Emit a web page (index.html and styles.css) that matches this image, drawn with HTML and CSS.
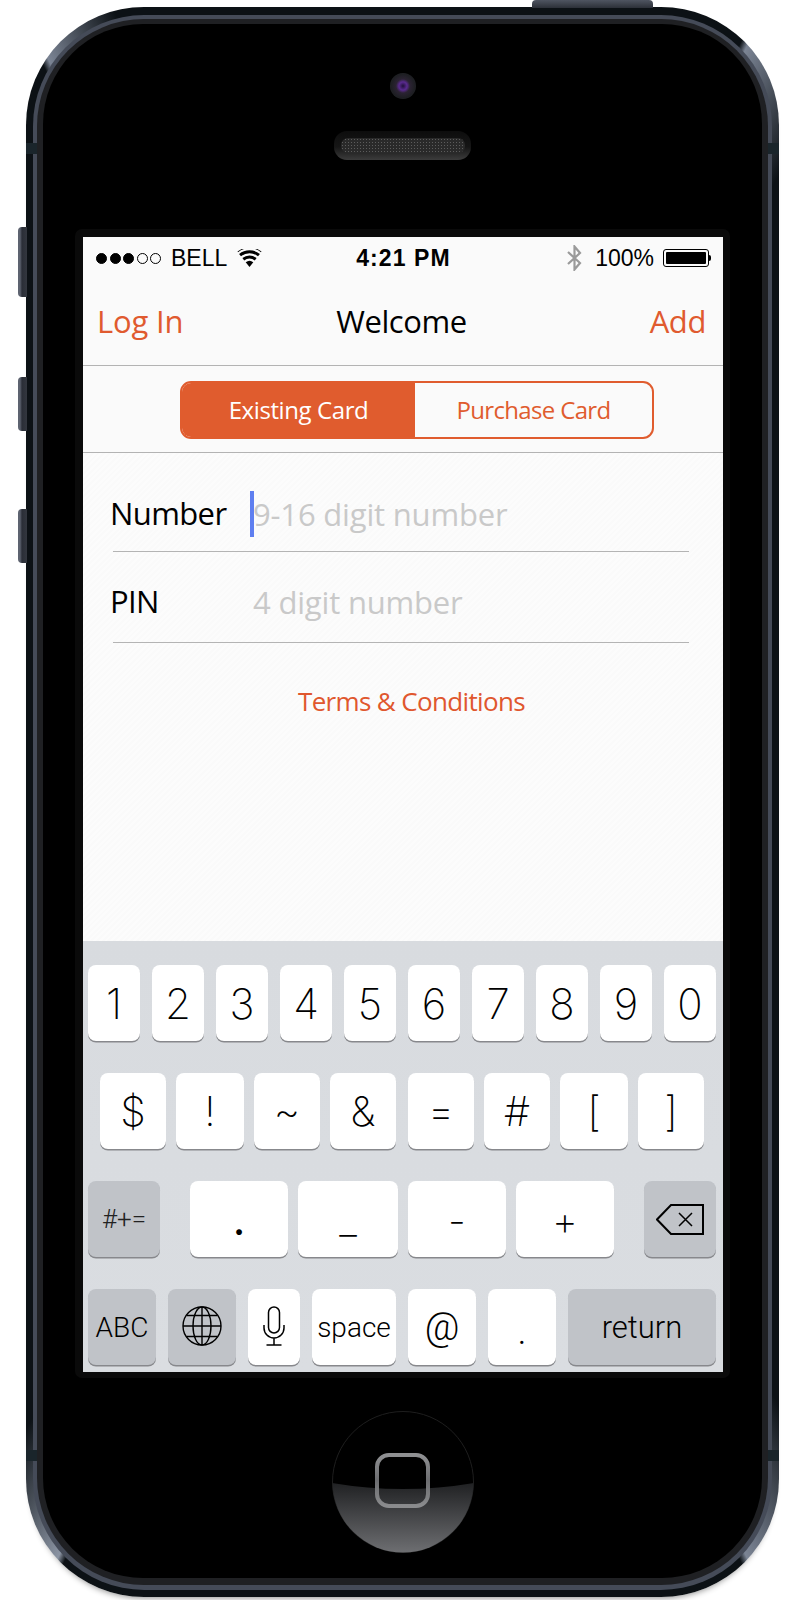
FILE: index.html
```html
<!DOCTYPE html>
<html lang="en">
<head>
<meta charset="utf-8">
<title>Welcome</title>
<link rel="stylesheet" href="styles.css">
</head>
<body>
<div class="phone">
  <span class="side-btn vol-a"></span>
  <span class="side-btn vol-b"></span>
  <span class="side-btn vol-c"></span>
  <span class="power-btn"></span>
  <span class="notch notch-tl"></span>
  <span class="notch notch-tr"></span>
  <span class="notch notch-bl"></span>
  <span class="notch notch-br"></span>
  <div class="rail">
    <div class="rail-inner">
      <div class="face">
        <div class="earpiece">
          <span class="camera"></span>
          <span class="speaker"><span class="grille"></span></span>
        </div>
        <div class="bezel">
          <div class="screen">
            <div class="status">
              <div class="status-left">
                <span class="dots">
                  <span class="dot on"></span><span class="dot on"></span><span class="dot on"></span><span class="dot"></span><span class="dot"></span>
                </span>
                <span class="carrier">BELL</span>
                <svg class="wifi" viewBox="0 0 24 18"><path d="M12 18 8.2 13.2a6 6 0 0 1 7.6 0z"/><path d="M6.7 11.4 4.9 9.1a11.2 11.2 0 0 1 14.2 0l-1.8 2.3a8.3 8.3 0 0 0-10.6 0z"/><path d="M3.5 7.3 1.6 5a16.4 16.4 0 0 1 20.8 0l-1.9 2.3a13.4 13.4 0 0 0-17 0z"/><path d="M.5 3.3 0 2.6a19 19 0 0 1 24 0l-.5.7a18 18 0 0 0-23 0z"/></svg>
              </div>
              <div class="time">4:21 PM</div>
              <div class="status-right">
                <svg class="bt" viewBox="0 0 17 26"><path d="M2 7 14 18 8.5 24.5V1.500L14 8 2 19" fill="none" stroke="#9a9a9a" stroke-width="2.200"/></svg>
                <span class="pct">100%</span>
                <span class="battery"><span class="charge"></span></span>
                <span class="nub"></span>
              </div>
            </div>
            <div class="nav">
              <span class="nav-link">Log In</span>
              <span class="nav-title">Welcome</span>
              <span class="nav-link nav-end">Add</span>
            </div>
            <div class="seg-bar">
              <div class="seg">
                <span class="seg-item active">Existing Card</span>
                <span class="seg-item">Purchase Card</span>
              </div>
            </div>
            <div class="form">
              <div class="row row-first">
                <span class="label">Number</span>
                <span class="value"><span class="cursor"></span>9-16 digit number</span>
              </div>
              <div class="row row-second">
                <span class="label">PIN</span>
                <span class="value">4 digit number</span>
              </div>
              <div class="terms">Terms &amp; Conditions</div>
            </div>
            <div class="keyboard">
              <div class="kb-row digits">
                <span class="key">1</span><span class="key">2</span><span class="key">3</span><span class="key">4</span><span class="key">5</span><span class="key">6</span><span class="key">7</span><span class="key">8</span><span class="key">9</span><span class="key">0</span>
              </div>
              <div class="kb-row symbols">
                <span class="key w66">$</span><span class="key w68">!</span><span class="key w66">~</span><span class="key w66">&amp;</span><span class="key w66 gap-more">=</span><span class="key w66">#</span><span class="key w68">[</span><span class="key w66">]</span>
              </div>
              <div class="kb-row third">
                <span class="key grey w72 small">#+=</span>
                <span class="key w98 gap-a heavy">.</span>
                <span class="key w100">_</span>
                <span class="key w98">-</span>
                <span class="key w98">+</span>
                <span class="key grey w72 gap-b">
                  <svg class="del" viewBox="0 0 48 31"><path d="M47 1v29H15L1 15.500 15 1z" fill="none" stroke="#000" stroke-width="2"/><path d="M23 9 36 22M36 9 23 22" fill="none" stroke="#000" stroke-width="1.500"/></svg>
                </span>
              </div>
              <div class="kb-row fourth">
                <span class="key grey w68 word">ABC</span>
                <span class="key grey w68">
                  <svg class="globe" viewBox="0 0 40 40" fill="none" stroke="#000" stroke-width="1.400"><circle cx="20" cy="20" r="19"/><ellipse cx="20" cy="20" rx="9" ry="19"/><path d="M20 1v38M1 20h38M4.500 9.500h31M4.500 30.500h31"/></svg>
                </span>
                <span class="key w52">
                  <svg class="mic" viewBox="0 0 22 40" fill="none" stroke="#000" stroke-width="1.500"><rect x="5.500" y="1" width="11" height="26" rx="5.500"/><path d="M1 19v3a10 10 0 0 0 20 0v-3M11 32v7M3.500 39h15"/></svg>
                </span>
                <span class="key w84 word">space</span>
                <span class="key w68 at">@</span>
                <span class="key w68 dot-key">.</span>
                <span class="key grey w148 ret">return</span>
              </div>
            </div>
          </div>
        </div>
        <div class="home">
          <svg class="home-svg" viewBox="0 0 142 142">
            <defs>
              <linearGradient id="glass" x1="0" y1="0" x2="0" y2="1">
                <stop offset="0" stop-color="#202123"/>
                <stop offset="1" stop-color="#6e6f72"/>
              </linearGradient>
              <linearGradient id="ring" x1="0" y1="0" x2="0" y2="1">
                <stop offset="0" stop-color="#8f9092"/>
                <stop offset="0.5" stop-color="#6c6d70"/>
                <stop offset="1" stop-color="#8a8b8d"/>
              </linearGradient>
              <clipPath id="disc"><circle cx="71" cy="71" r="70.500"/></clipPath>
            </defs>
            <circle cx="71" cy="71" r="70.500" fill="#000" stroke="#1e1e1e"/>
            <path d="M0 72Q71 84 142 72V142H0z" fill="url(#glass)" clip-path="url(#disc)"/>
            <rect x="45" y="44" width="51" height="51" rx="12" fill="none" stroke="url(#ring)" stroke-width="4"/>
          </svg>
        </div>
      </div>
    </div>
  </div>
</div>
</body>
</html>
```

FILE: styles.css
```css
* { box-sizing: border-box; }

html, body { margin: 0; padding: 0; background: #fff; }

body { height: 1600px; overflow: hidden; padding-top: 7px; }

/* ---------- device ---------- */
.phone {
  position: relative;
  width: 753px;
  margin-left: 26px;
  padding: 8px 7px 7px;
  border-radius: 118px;
  background: conic-gradient(
    #0c1115 0deg, #0c1115 24deg, #7b8494 24.500deg, #0c1115 31deg,
    #0c1115 148deg, #7b8494 155.500deg, #0c1115 156deg,
    #0c1115 204deg, #8b94a3 204.500deg, #0c1115 211deg,
    #0c1115 334deg, #7b8494 334.500deg, #0c1115 340deg, #0c1115 360deg);
  box-shadow: 0 6px 6px -5px rgba(0, 0, 0, .45);
}

.side-btn, .power-btn, .notch { position: absolute; display: block; }

.side-btn {
  left: -8px;
  width: 9px;
  border-radius: 4px 0 0 4px;
  background: linear-gradient(90deg, #5d6370 0, #5d6370 2px, #2a2e37 4px, #33373f 100%);
}
.vol-a { top: 220px; height: 70px; }
.vol-b { top: 370px; height: 54px; }
.vol-c { top: 502px; height: 54px; }

.power-btn {
  top: -7px;
  left: 506px;
  width: 121px;
  height: 8px;
  border-radius: 4px 4px 0 0;
  background: linear-gradient(180deg, #4f5561, #2c3038);
}

.notch { width: 11px; height: 11px; background: #1a252b; }
.notch-tl { top: 136px; left: 0; }
.notch-tr { top: 136px; right: 0; }
.notch-bl { top: 1443px; left: 0; }
.notch-br { top: 1443px; right: 0; }

.rail {
  padding: 4px 4px 5px;
  border-radius: 111px;
  background: #454b58;
}

.rail-inner {
  padding: 5px 6px 7px;
  border-radius: 107px;
  background: #1f2023;
}

.face {
  display: flex;
  flex-direction: column;
  align-items: center;
  border-radius: 100px;
  background: #000;
}

.earpiece {
  display: flex;
  flex-direction: column;
  align-items: center;
  height: 205px;
  padding-top: 49px;
  gap: 32px;
}

.camera {
  width: 26px;
  height: 26px;
  border-radius: 50%;
  background: radial-gradient(circle at 50% 50%, #20103a 0, #5a2a90 22%, #2b2333 38%, #1d1e22 65%, #2c2d31 100%);
}

.speaker {
  display: flex;
  align-items: center;
  justify-content: center;
  width: 137px;
  height: 29px;
  border-radius: 13px;
  background: linear-gradient(180deg, #0d0d0d 0, #161616 55%, #3c3c3c 100%);
}

.grille {
  width: 124px;
  height: 15px;
  border-radius: 7px;
  background-color: #2a2a2a;
  background-image: radial-gradient(circle, #5c5c5c 0.8px, transparent 1px);
  background-size: 3px 3px;
}

.bezel {
  width: 655px;
  padding: 8px 7px 6px 8px;
  border-radius: 7px;
  background: #0a0a0a;
}

/* ---------- screen ---------- */
.screen {
  display: flex;
  flex-direction: column;
  width: 640px;
  height: 1135px;
  background: #fafafa;
  font-family: "Open Sans", "Noto Sans", sans-serif;
}

.status {
  display: grid;
  grid-template-columns: 1fr auto 1fr;
  align-items: center;
  height: 43px;
  padding: 0 12px 1px 13px;
  font-family: "Liberation Sans", Arial, sans-serif;
  font-size: 23px;
  color: #000;
}

.status-left, .status-right { display: flex; align-items: center; }
.status-right { justify-content: flex-end; }

.dots { display: flex; gap: 2.500px; }
.dot {
  width: 11px;
  height: 11px;
  border: 1px solid #000;
  border-radius: 50%;
}
.dot.on { background: #000; }

.carrier { margin-left: 10px; }
.wifi { width: 25px; height: 18px; margin-left: 10px; }

.time { font-weight: 700; letter-spacing: 1.100px; }

.bt { width: 17px; height: 26px; }
.pct { margin-left: 12px; }

.battery {
  display: block;
  width: 46px;
  height: 18px;
  margin-left: 9px;
  padding: 2px;
  border: 1px solid #000;
  border-radius: 3px;
}
.charge { display: block; height: 100%; border-radius: 1px; background: #000; }
.nub { width: 2px; height: 6px; border-radius: 0 2px 2px 0; background: #000; }

.nav {
  display: grid;
  grid-template-columns: 1fr auto 1fr;
  align-items: center;
  height: 86px;
  padding: 0 17px 4px 14px;
  border-bottom: 1px solid #b3b3b3;
  font-size: 31px;
  letter-spacing: -.15px;
}
.nav-link { color: #e05a2f; }
.nav-end { justify-self: end; letter-spacing: -.4px; }
.nav-title { color: #000; letter-spacing: -.4px; }

.seg-bar {
  display: flex;
  height: 87px;
  padding: 15px 0 0 97px;
  border-bottom: 1px solid #b3b3b3;
}

.seg {
  display: flex;
  width: 474px;
  height: 58px;
  border: 2px solid #e05c2e;
  border-radius: 11px;
  overflow: hidden;
  font-size: 24px;
  letter-spacing: -.65px;
  color: #e05c2e;
}

.seg-item {
  display: flex;
  align-items: center;
  justify-content: center;
  flex: 1;
  padding-bottom: 2px;
}
.seg-item.active { flex: none; width: 233px; color: #fff; background: #e05c2e; letter-spacing: -.4px; }

.form {
  flex: 1;
  background: repeating-linear-gradient(135deg, #fcfcfc 0, #fcfcfc 2px, #fafafa 2px, #fafafa 4px);
}

.row {
  display: flex;
  align-items: flex-end;
  margin: 0 34px 0 30px;
  padding-bottom: 18px;
  border-bottom: 1px solid #b4b4b4;
  font-size: 31px;
  line-height: 40px;
  letter-spacing: -.6px;
}
.row-first { height: 99px; }
.row-second { height: 91px; padding-bottom: 21px; }

.label { flex: none; width: 141px; margin-left: -3px; margin-right: 2px; color: #000; }

.value { position: relative; top: 1px; color: #c9c9c9; letter-spacing: -.18px; }

.cursor {
  position: absolute;
  left: -3px;
  top: -3px;
  width: 4px;
  height: 46px;
  background: #5f7ff0;
}

.terms {
  margin-top: 38px;
  padding-left: 17px;
  text-align: center;
  font-size: 26px;
  letter-spacing: -.65px;
  line-height: 40px;
  color: #e0572e;
}

/* ---------- keyboard ---------- */
.keyboard {
  display: flex;
  flex-direction: column;
  gap: 31px;
  height: 431px;
  padding: 24px 0 0 5px;
  background: linear-gradient(180deg, #d8dbdf, #dadde1);
  font-family: Roboto, "Liberation Sans", sans-serif;
  font-weight: 300;
  color: #000;
}

.kb-row { display: flex; height: 77px; }

.key {
  display: flex;
  align-items: center;
  justify-content: center;
  flex: none;
  height: 76px;
  border-radius: 8px;
  background: #fff;
  box-shadow: 0 1.500px 0 #87888c;
}
.key.grey { background: #c0c3c8; }

.digits { gap: 12px; font-family: Inter, Roboto, sans-serif; font-weight: 200; font-size: 42px; }
.digits .key { width: 52px; }

.symbols { gap: 10px; padding-left: 12px; font-family: Inter, Roboto, sans-serif; font-weight: 200; font-size: 41px; }

.third { gap: 10px; font-family: Inter, Roboto, sans-serif; font-weight: 200; font-size: 40px; }
.third .key { padding-top: 2px; }
.fourth { gap: 12px; font-size: 28px; }

.w52 { width: 52px; }
.w66 { width: 66px; }
.w68 { width: 68px; }
.w72 { width: 72px; }
.w84 { width: 84px; }
.w98 { width: 98px; }
.w100 { width: 100px; }
.w148 { width: 148px; }

.gap-more { margin-left: 2px; }
.gap-a { margin-left: 20px; }
.gap-b { margin-left: 20px; }

.third .key.small { padding-top: 0; font-family: Roboto, sans-serif; font-weight: 300; font-size: 26px; color: #222; }
.third .key.heavy { font-weight: 500; }
.word { padding-top: 1px; }
.ret { font-size: 31px; }
.at { font-size: 38px; }
.dot-key { font-size: 38px; padding-top: 8px; }

.del { width: 48px; height: 31px; margin-bottom: 2px; }
.globe { width: 40px; height: 40px; margin-bottom: 2px; }
.mic { width: 22px; height: 40px; margin-bottom: 2px; }

/* ---------- home button ---------- */
.home { margin: 33px 0 25px; line-height: 0; }
.home-svg { width: 142px; height: 142px; }
```
